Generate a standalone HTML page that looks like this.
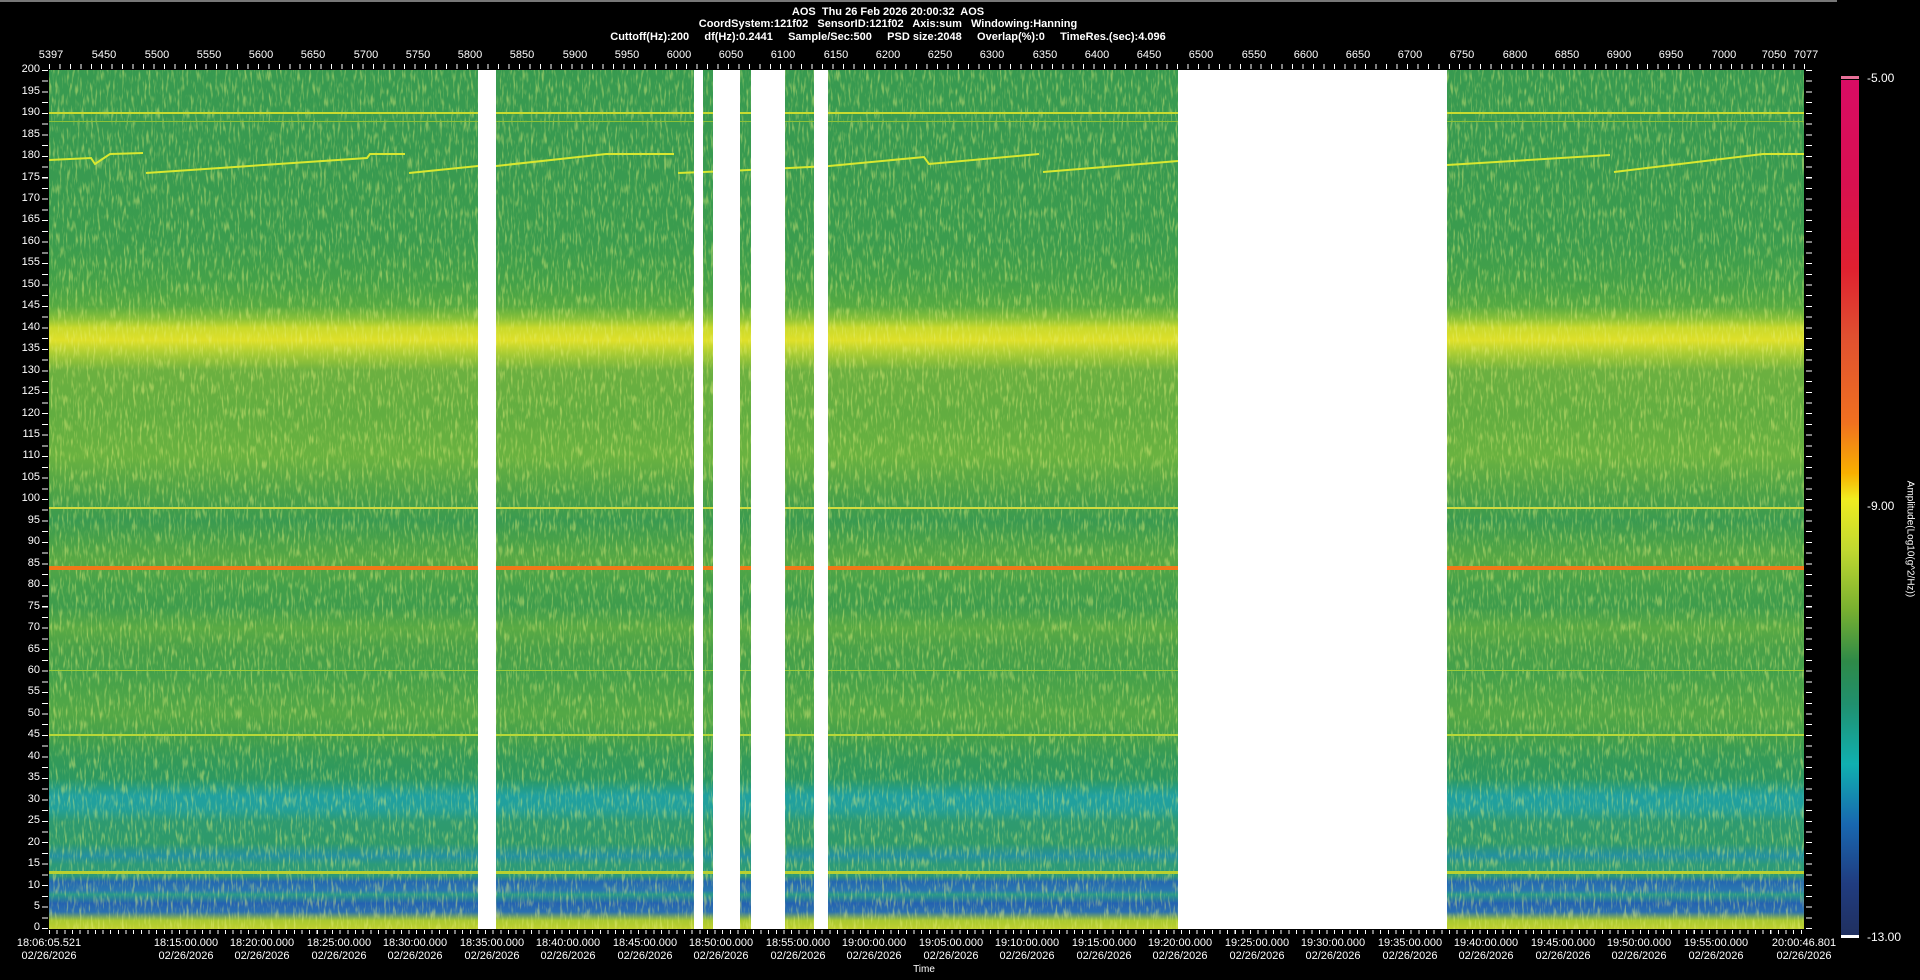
<!DOCTYPE html>
<html><head><meta charset="utf-8"><style>
*{margin:0;padding:0;box-sizing:border-box}
body{width:1920px;height:980px;background:#000;position:relative;overflow:hidden;font-family:"Liberation Sans",sans-serif;color:#fff}
.abs{position:absolute}
.t{position:absolute;font-size:11px;white-space:nowrap;transform:translateX(-50%)}
.tt{position:absolute;font-size:11px;font-weight:bold;white-space:pre;transform:translateX(-50%);left:888px}
#plot{left:49px;top:70px;width:1755px;height:859px;overflow:hidden;
background:linear-gradient(to bottom,#389a50 0%,#389a50 10%,#3b9c4e 20%,#45a248 25%,#56aa42 27.5%,#8cc238 29%,#c9d92c 30%,#dfe02a 31.5%,#a9cc34 33%,#6cb040 35%,#62ad40 40%,#6ab240 45%,#58a844 47.5%,#48a048 50%,#3a9a50 52.5%,#4aa248 55%,#58a844 57%,#44a04a 60%,#3e9c4c 62.5%,#5aaa44 65%,#48a048 67.5%,#44a04a 70%,#54a846 75%,#44a04a 77.5%,#349a58 80%,#2c9860 82.5%,#20a0a0 84.5%,#22a09a 86%,#2e9a70 87.5%,#2e9a6a 90%,#2390a0 91.5%,#2c9a78 92.5%,#2c9a78 93.8%,#2468b0 94.5%,#2a78b0 95.5%,#2a9a88 96%,#2462b0 97%,#2a70b0 98%,#a8c830 99%,#c0d030 100%)}
.hl{position:absolute;left:0;width:100%}
.gap{position:absolute;top:0;height:100%;background:#fff}
</style></head><body>
<div class="abs" style="left:0;top:0;width:1837px;height:2px;background:#777"></div>
<div class="tt" style="top:6px">AOS  Thu 26 Feb 2026 20:00:32  AOS</div>
<div class="tt" style="top:18px">CoordSystem:121f02   SensorID:121f02   Axis:sum   Windowing:Hanning</div>
<div class="tt" style="top:31px">Cuttoff(Hz):200     df(Hz):0.2441     Sample/Sec:500     PSD size:2048     Overlap(%):0     TimeRes.(sec):4.096</div>

<div class="abs" style="left:49px;top:64px;width:1756px;height:5px;background:repeating-linear-gradient(to right,#fff 0,#fff 1px,transparent 1px,transparent 10.446px)"></div>
<div style="position:absolute;top:49px;left:0">
<span class="t" style="left:51px">5397</span><span class="t" style="left:104px">5450</span><span class="t" style="left:157px">5500</span><span class="t" style="left:209px">5550</span><span class="t" style="left:261px">5600</span><span class="t" style="left:313px">5650</span><span class="t" style="left:366px">5700</span><span class="t" style="left:418px">5750</span><span class="t" style="left:470px">5800</span><span class="t" style="left:522px">5850</span><span class="t" style="left:575px">5900</span><span class="t" style="left:627px">5950</span><span class="t" style="left:679px">6000</span><span class="t" style="left:731px">6050</span><span class="t" style="left:783px">6100</span><span class="t" style="left:836px">6150</span><span class="t" style="left:888px">6200</span><span class="t" style="left:940px">6250</span><span class="t" style="left:992px">6300</span><span class="t" style="left:1045px">6350</span><span class="t" style="left:1097px">6400</span><span class="t" style="left:1149px">6450</span><span class="t" style="left:1201px">6500</span><span class="t" style="left:1254px">6550</span><span class="t" style="left:1306px">6600</span><span class="t" style="left:1358px">6650</span><span class="t" style="left:1410px">6700</span><span class="t" style="left:1462px">6750</span><span class="t" style="left:1515px">6800</span><span class="t" style="left:1567px">6850</span><span class="t" style="left:1619px">6900</span><span class="t" style="left:1671px">6950</span><span class="t" style="left:1724px">7000</span><span class="t" style="left:1774px">7050</span><span class="t" style="left:1806px">7077</span>
</div>

<div class="abs" style="left:42px;top:69.5px;width:6px;height:860px;background:repeating-linear-gradient(to bottom,#fff 0,#fff 1px,transparent 1px,transparent 10.725px)"></div>
<div class="abs" style="left:1806px;top:69.5px;width:6px;height:860px;background:repeating-linear-gradient(to bottom,#fff 0,#fff 1px,transparent 1px,transparent 10.725px)"></div>
<div class="abs" style="left:0;top:59.3px;width:40px;font-size:11px;text-align:right;line-height:21.45px">
<div>200</div><div>195</div><div>190</div><div>185</div><div>180</div><div>175</div><div>170</div><div>165</div><div>160</div><div>155</div><div>150</div><div>145</div><div>140</div><div>135</div><div>130</div><div>125</div><div>120</div><div>115</div><div>110</div><div>105</div><div>100</div><div>95</div><div>90</div><div>85</div><div>80</div><div>75</div><div>70</div><div>65</div><div>60</div><div>55</div><div>50</div><div>45</div><div>40</div><div>35</div><div>30</div><div>25</div><div>20</div><div>15</div><div>10</div><div>5</div><div>0</div>
</div>

<div id="plot" class="abs">
<svg width="1755" height="859" style="position:absolute;left:0;top:0">
<filter id="n" x="0" y="0" width="100%" height="100%"><feTurbulence type="fractalNoise" baseFrequency="0.45 0.08" numOctaves="2" seed="3"/><feColorMatrix type="matrix" values="0 0 0 0 0.8  0 0 0 0 0.88  0 0 0 0 0.2  3.5 0 0 0 -1.75"/></filter>
<rect width="1755" height="859" filter="url(#n)" opacity="0.45"/>
<g fill="none" stroke="#d8e830" stroke-width="2">
<polyline points="0,90 42,88 46,94 61,84 94,83"/>
<polyline points="97,103 318,88 321,84 356,84"/>
<polyline points="360,103 429,96 447,96 557,84 625,84"/>
<polyline points="629,103 680,101 780,96 875,87 880,94 990,84"/>
<polyline points="994,102 1129,91"/>
<polyline points="1398,95 1561,85"/>
<polyline points="1565,102 1714,84 1755,84"/>
</g>
</svg>
<div class="hl" style="top:42px;height:2px;background:#c8dc30"></div>
<div class="hl" style="top:51px;height:1px;background:#8cc238"></div>
<div class="hl" style="top:437px;height:2px;background:#d0dc40"></div>
<div class="hl" style="top:496px;height:4px;background:#f07818"></div>
<div class="hl" style="top:600px;height:1px;background:#9ccc38"></div>
<div class="hl" style="top:664px;height:2px;background:#b8d838"></div>
<div class="hl" style="top:801px;height:3px;background:#b8d030"></div>
<div class="gap" style="left:429px;width:18px"></div>
<div class="gap" style="left:645px;width:9px"></div>
<div class="gap" style="left:664px;width:27px"></div>
<div class="gap" style="left:702px;width:34px"></div>
<div class="gap" style="left:765px;width:14px"></div>
<div class="gap" style="left:1129px;width:269px"></div>
</div>

<div class="abs" style="left:49px;top:930px;width:1756px;height:4px;background:repeating-linear-gradient(to right,#fff 0,#fff 1px,transparent 1px,transparent 7.65px)"></div>
<div style="position:absolute;top:937px;left:0;line-height:13px">
<span class="t" style="left:49px;text-align:center">18:06:05.521<br>02/26/2026</span>
<span class="t" style="left:186px;text-align:center">18:15:00.000<br>02/26/2026</span>
<span class="t" style="left:262px;text-align:center">18:20:00.000<br>02/26/2026</span>
<span class="t" style="left:339px;text-align:center">18:25:00.000<br>02/26/2026</span>
<span class="t" style="left:415px;text-align:center">18:30:00.000<br>02/26/2026</span>
<span class="t" style="left:492px;text-align:center">18:35:00.000<br>02/26/2026</span>
<span class="t" style="left:568px;text-align:center">18:40:00.000<br>02/26/2026</span>
<span class="t" style="left:645px;text-align:center">18:45:00.000<br>02/26/2026</span>
<span class="t" style="left:721px;text-align:center">18:50:00.000<br>02/26/2026</span>
<span class="t" style="left:798px;text-align:center">18:55:00.000<br>02/26/2026</span>
<span class="t" style="left:874px;text-align:center">19:00:00.000<br>02/26/2026</span>
<span class="t" style="left:951px;text-align:center">19:05:00.000<br>02/26/2026</span>
<span class="t" style="left:1027px;text-align:center">19:10:00.000<br>02/26/2026</span>
<span class="t" style="left:1104px;text-align:center">19:15:00.000<br>02/26/2026</span>
<span class="t" style="left:1180px;text-align:center">19:20:00.000<br>02/26/2026</span>
<span class="t" style="left:1257px;text-align:center">19:25:00.000<br>02/26/2026</span>
<span class="t" style="left:1333px;text-align:center">19:30:00.000<br>02/26/2026</span>
<span class="t" style="left:1410px;text-align:center">19:35:00.000<br>02/26/2026</span>
<span class="t" style="left:1486px;text-align:center">19:40:00.000<br>02/26/2026</span>
<span class="t" style="left:1563px;text-align:center">19:45:00.000<br>02/26/2026</span>
<span class="t" style="left:1639px;text-align:center">19:50:00.000<br>02/26/2026</span>
<span class="t" style="left:1716px;text-align:center">19:55:00.000<br>02/26/2026</span>
<span class="t" style="left:1804px;text-align:center">20:00:46.801<br>02/26/2026</span>
</div>
<div class="t" style="left:924px;top:964px;font-size:10px">Time</div>

<div class="abs" style="left:1841px;top:76px;width:18px;height:3px;background:#e87098"></div>
<div class="abs" style="left:1841px;top:80px;width:18px;height:855px;background:linear-gradient(to bottom,#d80c64 0%,#d81050 12%,#e02030 22%,#e05030 30%,#f07020 40%,#f8b000 46%,#f0ec20 49%,#c0d830 55%,#78b030 62%,#2e8a48 68%,#20906e 73%,#10b0b0 80%,#1868b0 87%,#203c80 94%,#203060 100%)"></div>
<div class="abs" style="left:1841px;top:935px;width:18px;height:3px;background:#fff"></div>
<div class="abs" style="left:1867px;top:71px;font-size:12px">-5.00</div>
<div class="abs" style="left:1867px;top:499px;font-size:12px">-9.00</div>
<div class="abs" style="left:1867px;top:930px;font-size:12px">-13.00</div>
<div class="abs" style="left:1910px;top:539px;font-size:10px;white-space:nowrap;transform:translate(-50%,-50%) rotate(90deg)">Amplitude(Log10(g^2/Hz))</div>
</body></html>
